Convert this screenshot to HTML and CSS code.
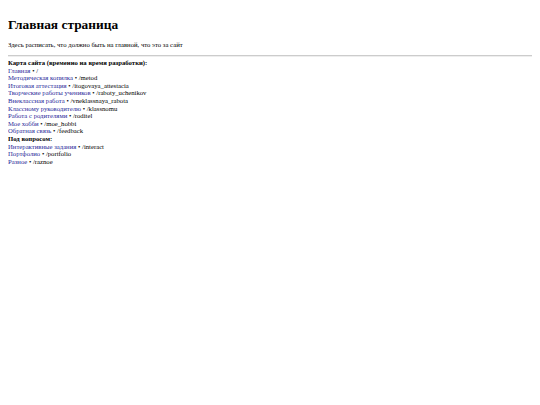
FILE: index.html
```html
<!DOCTYPE html>
<html lang="ru">
<head>
<meta charset="utf-8">
<title>Главная страница</title>
<link rel="stylesheet" href="styles.css">
</head>
<body>
<h1 class="title">Главная страница</h1>
<p class="intro">Здесь расписать, что должно быть на главной, что это за сайт</p>
<hr class="rule">
<div class="sitemap">
<b>Карта сайта (временно на время разработки):</b><br>
<a href="#">Главная</a> • /<br>
<a href="#">Методическая копилка</a> • /metod<br>
<a href="#">Итоговая аттестация</a> • /itogovaya_attestacia<br>
<a href="#">Творческие работы учеников</a> • /raboty_uchenikov<br>
<a href="#">Внеклассная работа</a> • /vneklassnaya_rabota<br>
<a href="#">Классному руководителю</a> • /klassnomu<br>
<a href="#">Работа с родителями</a> • /roditel<br>
<a href="#">Мое хобби</a> • /moe_hobbi<br>
<a href="#">Обратная связь</a> • /feedback<br>
<b>Под вопросом:</b><br>
<a href="#">Интерактивные задания</a> • /interact<br>
<a href="#">Портфолио</a> • /portfolio<br>
<a href="#">Разное</a> • /raznoe
</div>
</body>
</html>
```
FILE: styles.css
```css
body {
  margin: 8px;
  font-family: "Liberation Serif", "Times New Roman", serif;
  color: #000;
  background: #fff;
}
.title {
  font-size: 13.4px;
  font-weight: bold;
  margin: 9px 0 0;
  line-height: 15px;
}
.intro {
  font-size: 6.7px;
  line-height: 8px;
  margin: 9px 0 0;
}
.rule {
  margin: 6px 0 2px;
  border: 0;
  border-top: 1px solid #ccc;
  border-bottom: 1px solid #eee;
  height: 0;
}
.sitemap {
  font-size: 6.7px;
  line-height: 7.6px;
}
.sitemap a {
  color: #2a2a9a;
  text-decoration: none;
}
```
